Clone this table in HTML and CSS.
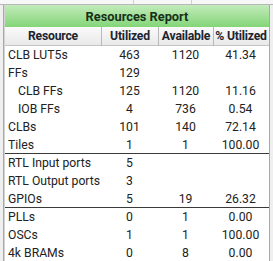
FILE: index.html
```html
<!DOCTYPE html>
<html>
<head>
<meta charset="utf-8">
<link rel="stylesheet" href="styles.css">
</head>
<body>
<div class="topstrip">
  <div class="ts ts1"></div>
  <div class="ts ts2"></div>
  <div class="ts ts3"></div>
</div>
<div class="frame">
  <div class="gutter-left"></div>
  <div class="report">
    <div class="title">Resources Report</div>
    <div class="grid head">
      <div class="hc">Resource</div>
      <div class="hc sep">Utilized</div>
      <div class="hc sep">Available</div>
      <div class="hc sep">% Utilized</div>
    </div>
    <div class="group">
      <div class="grid row"><div class="name">CLB LUT5s</div><div class="num">463</div><div class="num">1120</div><div class="num">41.34</div></div>
      <div class="grid row"><div class="name">FFs</div><div class="num">129</div><div class="num"></div><div class="num"></div></div>
      <div class="grid row"><div class="name sub">CLB FFs</div><div class="num">125</div><div class="num">1120</div><div class="num">11.16</div></div>
      <div class="grid row"><div class="name sub">IOB FFs</div><div class="num">4</div><div class="num">736</div><div class="num">0.54</div></div>
      <div class="grid row"><div class="name">CLBs</div><div class="num">101</div><div class="num">140</div><div class="num">72.14</div></div>
      <div class="grid row last"><div class="name">Tiles</div><div class="num">1</div><div class="num">1</div><div class="num">100.00</div></div>
    </div>
    <div class="group">
      <div class="grid row"><div class="name">RTL Input ports</div><div class="num">5</div><div class="num"></div><div class="num"></div></div>
      <div class="grid row"><div class="name">RTL Output ports</div><div class="num">3</div><div class="num"></div><div class="num"></div></div>
      <div class="grid row last"><div class="name">GPIOs</div><div class="num">5</div><div class="num">19</div><div class="num">26.32</div></div>
    </div>
    <div class="group">
      <div class="grid row"><div class="name">PLLs</div><div class="num">0</div><div class="num">1</div><div class="num">0.00</div></div>
      <div class="grid row"><div class="name">OSCs</div><div class="num">1</div><div class="num">1</div><div class="num">100.00</div></div>
      <div class="grid row"><div class="name">4k BRAMs</div><div class="num">0</div><div class="num">8</div><div class="num">0.00</div></div>
    </div>
  </div>
  <div class="gutter-right"></div>
</div>
</body>
</html>
```
FILE: styles.css
```css
html, body {
  margin: 0;
  padding: 0;
  background: #ffffff;
  overflow: hidden;
}
body {
  width: 273px;
  height: 261px;
  font-family: Roboto, "Liberation Sans", sans-serif;
  font-size: 12.2px;
  color: #222222;
}
.topstrip {
  display: flex;
  height: 4px;
  border-bottom: 1px solid #b8b8b8;
  background: #f7f7f7;
}
.ts1 { width: 133px; border-right: 1px solid #d0d0d0; }
.ts2 { width: 57px; border-right: 1px solid #d0d0d0; }
.ts3 { flex: 1; }
.frame {
  display: flex;
  height: 256px;
}
.gutter-left {
  width: 3px;
  background: #efefef;
  border-right: 1px solid #a8a8a8;
}
.gutter-right {
  width: 3px;
  background: #efefef;
  border-left: 1px solid #a8a8a8;
}
.report {
  width: 264px;
  border-left: 1px solid #d4d4d4;
  background: #ffffff;
  overflow: hidden;
}
.title {
  height: 22px;
  line-height: 23px;
  text-align: center;
  font-weight: bold;
  font-size: 12.8px;
  color: #17301a;
  background: linear-gradient(#c2ebba, #84d578);
}
.grid {
  display: grid;
  grid-template-columns: 96px 57px 55px 55px;
}
.head {
  height: 18px;
  line-height: 19px;
  background: linear-gradient(#fafafa, #e9e9e9);
  border-bottom: 1px solid #c4c4c4;
}
.hc {
  text-align: center;
  font-weight: bold;
  color: #1c2430;
  white-space: nowrap;
  letter-spacing: -0.2px;
}
.hc.sep {
  border-left: 1px solid #b8b8b8;
}
.row {
  height: 18px;
  line-height: 19px;
}
.row.last {
  height: 17px;
  line-height: 18px;
  border-bottom: 1px solid #3a3a3a;
}
.name {
  padding-left: 3px;
  white-space: nowrap;
}
.name.sub {
  padding-left: 13px;
}
.num {
  text-align: center;
}
```
